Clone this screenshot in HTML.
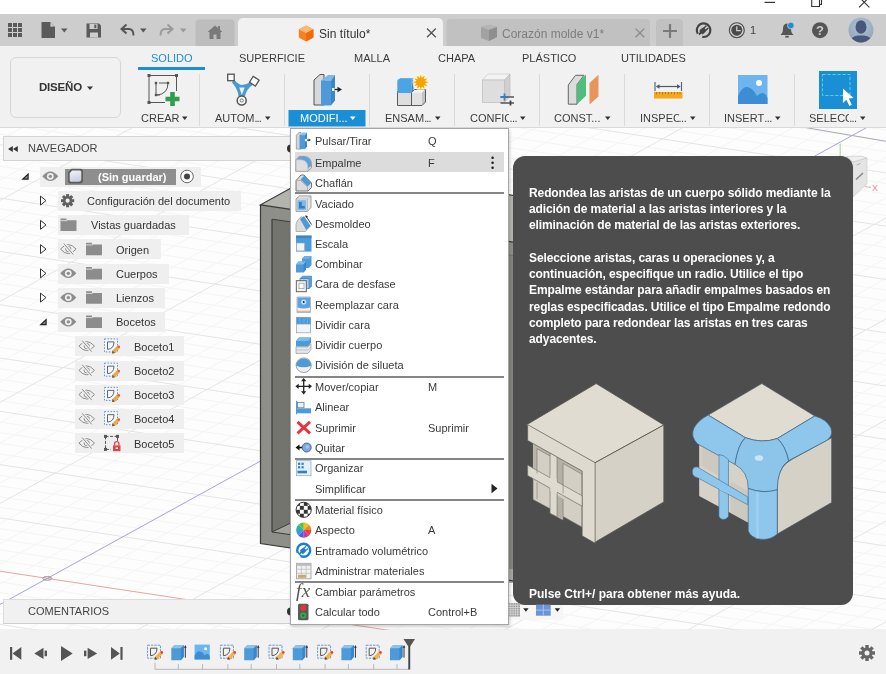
<!DOCTYPE html>
<html lang="es"><head><meta charset="utf-8"><title>Fusion 360</title>
<style>
html,body{margin:0;padding:0}
body{width:886px;height:674px;position:relative;overflow:hidden;background:#fff;font-family:"Liberation Sans",sans-serif;color:#333;font-size:12px}
.abs{position:absolute}
div{will-change:transform}
#titlebar{left:0;top:0;width:886px;height:14px;background:#fff}
#appbar{left:0;top:14px;width:886px;height:32px;background:#cdcdcd}
#ribbon{left:0;top:46px;width:886px;height:81px;background:#f1f1f1;border-bottom:1px solid #d9d9d9}
#canvas{left:0;top:128px;width:886px;height:502px;background:#fdfdfd}
#timeline{left:0;top:628.500px;width:886px;height:45.500px;background:#f1f1f1}
.rtab{position:absolute;top:51.500px;font-size:11px;line-height:13px;color:#3c3c3c;white-space:nowrap}
.glabel{position:absolute;top:112px;font-size:11px;line-height:13px;color:#3c3c3c;white-space:nowrap}
.gsep{position:absolute;top:74px;width:1px;height:52px;background:#dcdcdc}
.nav{position:absolute;font-size:11px;line-height:13px;color:#333;white-space:nowrap}
.navbg{position:absolute;background:#efefef;height:22px}
.mi{position:absolute;left:24px;font-size:11px;line-height:13px;color:#3a3a3a;white-space:nowrap}
.mk{position:absolute;left:137px;font-size:11px;line-height:13px;color:#3a3a3a;white-space:nowrap}
.tl{position:absolute;left:529.400px;font-size:12px;line-height:16px;font-weight:bold;color:#fff;letter-spacing:-0.100px;white-space:nowrap}
.clip{display:inline-block;overflow:hidden;vertical-align:top;height:13px}
.msep{position:absolute;left:5px;width:209px;height:2px;background:#9a9a9a}
</style></head><body>
<div id="titlebar" class="abs"></div>
<div id="appbar" class="abs"></div>
<div id="ribbon" class="abs"></div>
<div id="canvas" class="abs"></div>
<div id="timeline" class="abs"></div>
<!--TOPBAR-->
<svg class="abs" style="left:0;top:0" width="886" height="46" viewBox="0 0 886 46">
<!-- window controls -->
<rect x="764.500" y="1.800" width="10.500" height="1.200" fill="#333"/>
<path d="M811.700 -1V6.500H819.500V-1" fill="none" stroke="#333" stroke-width="1.100"/>
<path d="M819.500 4.500H821.500V-1" fill="none" stroke="#333" stroke-width="1.100"/>
<path d="M859 7.400L869.500 -3M869.400 7.400L859 -3" stroke="#333" stroke-width="1.100"/>
<!-- tabs -->
<path d="M195.500 46V23.500a4 4 0 0 1 4-4h31a4 4 0 0 1 4 4V46Z" fill="#bdbdbd"/>
<path d="M238 46V23a5 5 0 0 1 5-5h195a5 5 0 0 1 5 5V46Z" fill="#f1f1f1"/>
<path d="M446.500 46V23a4 4 0 0 1 4-4h195.500a4 4 0 0 1 4 4V46Z" fill="#c1c1c1"/>
<path d="M656 46V23a4 4 0 0 1 4-4h19a4 4 0 0 1 4 4V46Z" fill="#c1c1c1"/>
<!-- grid icon -->
<g fill="#5a5a5a">
<rect x="8" y="23" width="4" height="4"/><rect x="13" y="23" width="4" height="4"/><rect x="18" y="23" width="4" height="4"/>
<rect x="8" y="28" width="4" height="4"/><rect x="13" y="28" width="4" height="4"/><rect x="18" y="28" width="4" height="4"/>
<rect x="8" y="33" width="4" height="4"/><rect x="13" y="33" width="4" height="4"/><rect x="18" y="33" width="4" height="4"/>
</g>
<!-- file icon -->
<path d="M41.5 22H50L55 27V38H41.5Z" fill="#5a5a5a"/><path d="M50 22V27H55" fill="#cdcdcd" stroke="#5a5a5a" stroke-width="0.8"/>
<path d="M61 28.5h6.5l-3.25 4z" fill="#5a5a5a"/>
<!-- save icon -->
<path d="M86.5 23.5H99L101 25.5V37.5H86.5Z" fill="#5a5a5a"/>
<rect x="89.5" y="24" width="8" height="5" fill="#cdcdcd"/><rect x="94.3" y="24.6" width="2" height="3.6" fill="#5a5a5a"/>
<rect x="90" y="32.5" width="8" height="5" fill="#cdcdcd"/>
<!-- undo -->
<path d="M126.5 24.5L121.5 29L126.5 33.5" fill="none" stroke="#555" stroke-width="2" stroke-linejoin="miter"/>
<path d="M122 29H129.5Q133.5 29.5 133.5 35.5" fill="none" stroke="#555" stroke-width="2"/>
<path d="M140 28.5h6.5l-3.25 4z" fill="#555"/>
<!-- redo -->
<path d="M167.5 24.5L172.5 29L167.5 33.5" fill="none" stroke="#9a9a9a" stroke-width="2"/>
<path d="M172 29H164.5Q160.5 29.5 160.5 35.5" fill="none" stroke="#9a9a9a" stroke-width="2"/>
<path d="M180 28.5h6.5l-3.25 4z" fill="#9a9a9a"/>
<!-- home -->
<path d="M207.5 32L215 25.5L218 28V26H220V29.8L222.5 32H220.5V39H216.5V34.5H213.5V39H209.5V32Z" fill="#7a7a7a"/>
<!-- orange cube -->
<path d="M306 25.500L313.400 29.300V37.500L306 41.500L298.800 37.500V29.300Z" fill="#f58220"/>
<path d="M306 25.500L313.400 29.300L306 33.200L298.800 29.300Z" fill="#ffb874"/>
<path d="M306 33.200L313.400 29.300V37.500L306 41.500Z" fill="#f06a0a"/>
<!-- close active -->
<path d="M427 28.500L435.800 37.300M435.800 28.500L427 37.300" stroke="#555" stroke-width="1.300"/>
<!-- gray cube -->
<path d="M481 27L489 25L497 27V37L489 41L481 38Z" fill="#a2a2a2"/>
<path d="M481 27L489 25L497 27L489 30Z" fill="#b5b5b5"/>
<path d="M489 30L497 27V37L489 41Z" fill="#8f8f8f"/>
<path d="M635.600 28.600L644.200 37.200M644.200 28.600L635.600 37.200" stroke="#8a8a8a" stroke-width="1.300"/>
<!-- plus -->
<path d="M663 31H677M670 24V38" stroke="#7a7a7a" stroke-width="2.2"/>
<!-- job status -->
<circle cx="703.600" cy="30.200" r="6.800" fill="none" stroke="#444" stroke-width="2.200" stroke-dasharray="36.700 6" transform="rotate(150 703.600 30.200)"/>
<g transform="rotate(-42 703.600 30.200)" fill="#444"><rect x="699.600" y="27.600" width="6" height="5.200" rx="1.600"/><rect x="697.200" y="29.300" width="3" height="1.800"/><rect x="705" y="28" width="3.600" height="1.400"/><rect x="705" y="31" width="3.600" height="1.400"/></g>
<!-- clock -->
<circle cx="736.800" cy="30.200" r="7.500" fill="none" stroke="#4a4a4a" stroke-width="1.100"/>
<circle cx="736.800" cy="30.200" r="5.500" fill="#4a4a4a"/>
<path d="M736.800 26.200V30.700H740.800" fill="none" stroke="#cdcdcd" stroke-width="1.300"/>
<!-- bell -->
<path d="M780.400 35Q783 33 783 28.500Q783 24 787 23.500Q791 24 791 28.500Q791 33 793.600 35Z" fill="#555"/>
<rect x="785.300" y="35.800" width="3.400" height="1.800" fill="#555"/>
<circle cx="790.800" cy="25.500" r="3.300" fill="#1a8fd6" stroke="#cdcdcd" stroke-width="0.800"/>
<!-- help -->
<circle cx="820" cy="30.200" r="8" fill="#555"/>
<!-- avatar -->
<defs><clipPath id="av"><circle cx="861" cy="30" r="12.500"/></clipPath>
<radialGradient id="avg" cx="0.5" cy="0.35" r="0.7"><stop offset="0" stop-color="#b4c4d6"/><stop offset="1" stop-color="#8ea2ba"/></radialGradient></defs>
<circle cx="861" cy="30" r="12.500" fill="url(#avg)"/>
<g clip-path="url(#av)" fill="#47587a"><ellipse cx="861" cy="27" rx="5.500" ry="6.800"/><path d="M849 44Q850 36.500 858 35.500H864Q872 36.500 873 44Z"/></g>
</svg>
<div class="abs" style="left:319px;top:27px;font-size:12px;color:#333;line-height:14px">Sin título*</div>
<div class="abs" style="left:502px;top:27px;font-size:12px;color:#7d7d7d;line-height:14px">Corazón molde v1*</div>
<div class="abs" style="left:749.500px;top:23.500px;font-size:11px;color:#444;line-height:13px">1</div>
<div class="abs" style="left:816px;top:23px;font-size:13px;font-weight:bold;color:#cdcdcd;line-height:15px">?</div>
<!--/TOPBAR-->
<!--RIBBON-->
<div class="abs" style="left:10px;top:57px;width:111px;height:61px;border:1px solid #d6d6d6;border-radius:6px;box-sizing:border-box;background:#f1f1f1"></div>
<div class="abs" style="left:39px;top:80px;font-size:11.5px;font-weight:bold;color:#333;letter-spacing:-0.2px;line-height:14px">DISEÑO</div>
<svg class="abs" style="left:0;top:46px" width="886" height="84" viewBox="0 46 886 84">
<path d="M87 86.500h6l-3 3.500z" fill="#333"/>
<rect x="138" y="67" width="67" height="3" fill="#1a8fd6"/>
<rect x="288.500" y="110" width="77" height="16.500" fill="#1a8fd6"/>
<g fill="#dadada">
<rect x="199" y="74" width="1" height="52"/><rect x="284" y="74" width="1" height="52"/><rect x="369" y="74" width="1" height="52"/>
<rect x="454" y="74" width="1" height="52"/><rect x="539" y="74" width="1" height="52"/><rect x="624" y="74" width="1" height="52"/>
<rect x="709" y="74" width="1" height="52"/><rect x="794" y="74" width="1" height="52"/></g>
<!-- arrows -->
<g fill="#333">
<path d="M182 116.500h5.500l-2.750 3.500z"/><path d="M265 116.500h5.500l-2.750 3.500z"/>
<path d="M435 116.500h5.500l-2.750 3.500z"/><path d="M520 116.500h5.500l-2.750 3.500z"/>
<path d="M605 116.500h5.500l-2.750 3.500z"/><path d="M690 116.500h5.500l-2.750 3.500z"/>
<path d="M775 116.500h5.500l-2.750 3.500z"/><path d="M860 116.500h5.500l-2.750 3.500z"/></g>
<path d="M350 116.500h5.500l-2.750 3.500z" fill="#fff"/>
<!-- CREAR icon -->
<g fill="none" stroke="#555" stroke-width="1">
<path d="M149 75.500H176.500M149 75.500V102.500M149 102.500H165M176.500 75.500V91" stroke-dasharray="none"/>
<path d="M156 83V95M156 95H160M159 83H168"/>
<path d="M168 83Q168 94 157 95" stroke="#555"/>
</g>
<g fill="#555"><rect x="147.500" y="74" width="3" height="3"/><rect x="175" y="74" width="3" height="3"/><rect x="147.500" y="101" width="3" height="3"/>
<rect x="154.800" y="81.800" width="2.400" height="2.400"/><rect x="166.800" y="81.800" width="2.400" height="2.400"/><rect x="154.800" y="93.800" width="2.400" height="2.400"/></g>
<path d="M170.200 92h4.600v4.700h4.700v4.600h-4.700v4.700h-4.600v-4.700h-4.700v-4.600h4.700z" fill="#2f9e4a"/>
<!-- AUTOM icon -->
<g>
<path d="M234 79.500Q238 84.300 241.700 85Q246 84.800 251 82L252.500 85Q247 88.500 245 96H238.500Q237.800 89 232 82.500Z" fill="#4a9ad0"/>
<path d="M239.200 87.600L244.700 87.400L241.900 95Z" fill="#e4f2fb"/>
<circle cx="241.700" cy="100.500" r="4.500" fill="#fafafa" stroke="#555" stroke-width="1.500"/><circle cx="241.700" cy="100.500" r="1.600" fill="none" stroke="#666" stroke-width="0.900"/>
<rect x="227.700" y="74.200" width="6.500" height="6.500" fill="#fafafa" stroke="#555" stroke-width="1.300"/>
<rect x="250.800" y="77.700" width="7" height="7" fill="#fafafa" stroke="#555" stroke-width="1.300" transform="rotate(32 254.300 81.200)"/>
</g>
<!-- MODIFI icon -->
<g>
<path d="M314 80L320 74.500H324V105H314Z" fill="#d8d8d8" stroke="#555" stroke-width="1"/>
<path d="M321 80.500L328 75H335L331 80.500Z" fill="#7db9e8"/>
<path d="M331 80.500L335 75V100.500L331 105.500Z" fill="#3a86c8"/>
<rect x="321" y="80.500" width="10" height="25" fill="#4d9ad9"/>
<path d="M332 89.500H338" stroke="#222" stroke-width="1.300"/><path d="M337.500 86.800L342 89.500L337.500 92.200Z" fill="#222"/>
<rect x="332" y="88" width="2.500" height="3" fill="#fff"/>
</g>
<!-- ENSAM icon -->
<g>
<path d="M397.500 90.500H411.500V105.500H397.500Z" fill="#dedede"/>
<path d="M411.500 92.500H422V105.500H411.500Z" fill="#e2e2e2"/>
<path d="M411.500 92.500L414.500 89.500H425.500L422 92.500Z" fill="#f2f2f2"/>
<path d="M422 92.500L425.500 89.500V102L422 105.500Z" fill="#c4c4c4"/>
<path d="M397.500 91V105.500H422L425.500 102V89.500H414.500L411.500 92.500V105.500" fill="none" stroke="#5a5a5a" stroke-width="1"/>
<path d="M397.500 81L400.500 78H413.500L411.500 81Z" fill="#7cc0f0"/>
<path d="M397.300 81Q397.300 79 400 78.500H411.500V93H397.300Z" fill="#4da4e4"/>
<path d="M411.500 81L413.500 78V90L411.500 93Z" fill="#3a86c8"/>
<circle cx="420.8" cy="82.2" r="8.500" fill="#fff6c8" opacity="0.700"/>
<path d="M420.8 74.6L421.9 78.0L424.6 75.6L423.8 79.2L427.4 78.4L425.0 81.1L428.4 82.2L425.0 83.3L427.4 86.0L423.8 85.2L424.6 88.8L421.9 86.4L420.8 89.8L419.7 86.4L417.0 88.8L417.8 85.2L414.2 86.0L416.6 83.3L413.2 82.2L416.6 81.1L414.2 78.4L417.8 79.2L417.0 75.6L419.7 78.0Z" fill="#f7a400"/>
</g>
<!-- CONFIG icon -->
<g>
<path d="M482.500 80L488 74H510L504.500 80Z" fill="#f3f3f3" stroke="#c9c9c9" stroke-width="0.700"/>
<rect x="482.500" y="80" width="22" height="22.500" fill="#dedede" stroke="#bdbdbd" stroke-width="0.700"/>
<path d="M504.500 80L510 74V96.500L504.500 102.500Z" fill="#cfcfcf" stroke="#bdbdbd" stroke-width="0.700"/>
<path d="M500.500 97H514M500.500 103H514" stroke="#555" stroke-width="1.400"/>
<path d="M504.500 93.500V100.500" stroke="#2f7fc2" stroke-width="1.800"/><path d="M500.500 97H508" stroke="#2f7fc2" stroke-width="1.600"/>
<path d="M510.500 100.500V105.500" stroke="#444" stroke-width="1.800"/>
</g>
<!-- CONST icon -->
<g>
<path d="M568.300 85L575.500 75.300H584L577 84.500V104.200H568.300Z" fill="#dcdcdc" stroke="#666" stroke-width="1"/>
<path d="M577 83.800L586 74.500V95.800L577 104.200Z" fill="#4fbd7c"/>
<path d="M589.500 83L598.500 74.800V96.500L589.500 104.500Z" fill="#e8955c"/>
</g>
<!-- INSPEC icon -->
<g>
<rect x="654" y="92" width="28.500" height="6.500" fill="#f5a81c"/>
<path d="M656.500 92v2.500M659.500 92v2M662.500 92v2.500M665.500 92v2M668.500 92v2.500M671.500 92v2M674.500 92v2.500M677.500 92v2M680 92v2.500" stroke="#b3720a" stroke-width="0.800"/>
<path d="M655 82V91M681.500 82V91" stroke="#4a6f8a" stroke-width="1.200"/>
<path d="M657 86.500H679.500" stroke="#4a5a66" stroke-width="1.200"/>
<path d="M655.800 86.500L659.500 84.200V88.800ZM680.700 86.500L677 84.200V88.800Z" fill="#4a5a66"/>
</g>
<!-- INSERT icon -->
<g>
<rect x="738" y="75" width="29.500" height="29" fill="#6cb5ef"/>
<path d="M738 96Q742 86.500 747.500 87Q753 88 757 96Q760.500 92.500 763 93Q766 94 767.500 98V104H738Z" fill="#3d8dd4"/>
<circle cx="759" cy="83" r="3" fill="#fffbe6"/>
</g>
<!-- SELECC icon -->
<g>
<rect x="819" y="71" width="38" height="38" fill="#1a8fd6"/>
<rect x="822.500" y="74.500" width="27.500" height="21" fill="none" stroke="#58d0f0" stroke-width="1" stroke-dasharray="3.200 1.800"/>
<path d="M843 88.500L853.500 98L848.800 98.500L851.800 104.800L849.400 106L846.400 99.800L843 103Z" fill="#fff"/>
</g>
</svg>
<div class="rtab" style="left:150.500px;color:#1a8fd6">SOLIDO</div>
<div class="rtab" style="left:239px">SUPERFICIE</div>
<div class="rtab" style="left:354px">MALLA</div>
<div class="rtab" style="left:437.500px">CHAPA</div>
<div class="rtab" style="left:521.500px">PLÁSTICO</div>
<div class="rtab" style="left:621px">UTILIDADES</div>
<div class="glabel" style="left:140.500px">CREAR</div>
<div class="glabel" style="left:214.500px">AUTOM<span style="letter-spacing:-1px">...</span></div>
<div class="glabel" style="left:299.500px;color:#fff">MODIFI...</div>
<div class="glabel" style="left:384.500px">ENSAM<span style="letter-spacing:-0.900px">...</span></div>
<div class="glabel" style="left:469.500px">CONFI<span class="clip" style="width:5.200px">C</span><span style="letter-spacing:-0.500px">...</span></div>
<div class="glabel" style="left:554px">CONST...</div>
<div class="glabel" style="left:639.500px">INSPE<span class="clip" style="width:5.500px">C</span><span style="letter-spacing:-0.500px">...</span></div>
<div class="glabel" style="left:724px">INSERT<span style="letter-spacing:-0.500px">...</span></div>
<div class="glabel" style="left:809px">SELEC<span class="clip" style="width:4.200px">C</span><span style="letter-spacing:-0.700px">...</span></div>
<!--/RIBBON-->
<!--CANVAS-->
<svg class="abs" style="left:0;top:128px" width="886" height="502" viewBox="0 128 886 502">
<path d="M0 -4.4L886 130.2M0 6.2L886 140.9M0 16.9L886 151.6M0 27.6L886 162.2M0 48.9L886 183.5M0 59.5L886 194.2M0 70.2L886 204.9M0 80.9L886 215.5M0 102.2L886 236.8M0 112.8L886 247.5M0 123.5L886 258.2M0 134.2L886 268.8M0 155.5L886 290.1M0 166.1L886 300.8M0 176.8L886 311.5M0 187.5L886 322.1M0 208.8L886 343.4M0 219.4L886 354.1M0 230.1L886 364.8M0 240.8L886 375.4M0 262.1L886 396.7M0 272.7L886 407.4M0 283.4L886 418.1M0 294.1L886 428.7M0 315.4L886 450.0M0 326.0L886 460.7M0 336.7L886 471.4M0 347.4L886 482.0M0 368.7L886 503.3M0 379.3L886 514.0M0 390.0L886 524.7M0 400.7L886 535.3M0 422.0L886 556.6M0 432.6L886 567.3M0 443.3L886 578.0M0 454.0L886 588.6M0 475.3L886 609.9M0 485.9L886 620.6M0 496.6L886 631.3M0 507.3L886 641.9M0 528.6L886 663.2M0 539.2L886 673.9M0 549.9L886 684.6M0 560.6L886 695.2M0 581.9L886 716.5M0 592.5L886 727.2M0 603.2L886 737.9M0 613.9L886 748.5M0 139.8L886 -347.7M0 160.0L886 -327.5M0 180.2L886 -307.3M0 220.6L886 -266.9M0 240.8L886 -246.7M0 261.0L886 -226.5M0 281.2L886 -206.3M0 321.6L886 -165.9M0 341.8L886 -145.7M0 362.0L886 -125.5M0 382.2L886 -105.3M0 422.6L886 -64.9M0 442.8L886 -44.7M0 463.0L886 -24.5M0 483.2L886 -4.3M0 523.6L886 36.1M0 543.8L886 56.3M0 564.0L886 76.5M0 584.2L886 96.7M0 624.6L886 137.1M0 644.8L886 157.3M0 665.0L886 177.5M0 685.2L886 197.7M0 725.6L886 238.1M0 745.8L886 258.3M0 766.0L886 278.5M0 786.2L886 298.7M0 826.6L886 339.1M0 846.8L886 359.3M0 867.0L886 379.5M0 887.2L886 399.7M0 927.6L886 440.1M0 947.8L886 460.3M0 968.0L886 480.5M0 988.2L886 500.7M0 1028.6L886 541.1M0 1048.8L886 561.3M0 1069.0L886 581.5M0 1089.2L886 601.7" stroke="#f4f4f4" stroke-width="1" fill="none"/>
<path d="M0 38.2L886 172.9M0 91.5L886 226.2M0 144.8L886 279.5M0 198.1L886 332.8M0 251.4L886 386.1M0 304.7L886 439.4M0 358.0L886 492.7M0 411.3L886 546.0M0 464.6L886 599.3M0 517.9L886 652.6M0 624.5L886 759.2M0 200.4L886 -287.1M0 301.4L886 -186.1M0 402.4L886 -85.1M0 503.4L886 15.9M0 705.4L886 217.9M0 806.4L886 318.9M0 907.4L886 419.9M0 1008.4L886 520.9M0 1109.4L886 621.9" stroke="#e4e4e6" stroke-width="1" fill="none"/>
<path d="M0 571.2L886 705.9" stroke="#e9a3a3" stroke-width="1" fill="none"/>
<path d="M0 604.4L886 116.9" stroke="#a4a4d8" stroke-width="1" fill="none"/>
<ellipse cx="47.3" cy="578.4" rx="4.500" ry="1.800" fill="none" stroke="#9a8a90" stroke-width="1"/>
<g>
<path d="M260.500 204.800L328 167.700L520 196.500V243.200Z" fill="#b4b4af"/>
<path d="M260.500 204.800L520 243.200V582L260.500 543.600Z" fill="#8f8f8a"/>
<path d="M272 219.200L520 256V568L272 532Z" fill="#74746f"/>
<path d="M272 532L300 518.500V536Z" fill="#a3a39e"/><path d="M500 256V569H520V256Z" fill="#858580"/><path d="M500 569H520V583H500Z" fill="#a6a6a1"/>
<path d="M272 219.200V532" stroke="#3c3c3a" stroke-width="1.200" fill="none"/>
<path d="M272 219.200L300 223.200M272 532L300 518.500M272 532L300 536" stroke="#3c3c3a" stroke-width="1" fill="none"/>
<path d="M520 196.500L328 167.700L260.500 204.800L520 243.200M260.500 204.800V543.600L520 582" stroke="#3a3a38" stroke-width="1.200" fill="none"/>
</g>
<g>
<path d="M800 126.600L886 141.300" stroke="#a8a8b4" stroke-width="1"/>
<path d="M840.200 143.500V157" stroke="#a4e4a4" stroke-width="1.300"/>
<path d="M846.500 156.500L861 156L867 158L867 184L853 197L846.500 192Z" fill="#ebebeb"/>
<path d="M853 162L867 158V184L853 197Z" fill="#e4e4e4" stroke="#cfcfcf" stroke-width="0.600"/>
<path d="M846.500 156.500L861 156L867 158L853 162Z" fill="#efefef" stroke="#c4c4c4" stroke-width="0.600"/>
<path d="M856 179.500L863 173" stroke="#8a8a8a" stroke-width="1.600"/>
<path d="M856.500 165L860.500 163.500" stroke="#b0b0b0" stroke-width="1"/>
<path d="M865 186.500L871 187.500" stroke="#ecaab4" stroke-width="1"/>
</g>
</svg>
<div class="abs" style="left:872.300px;top:183px;font-size:9px;line-height:10px;color:#e88a98">X</div>
<svg class="abs" style="left:500px;top:596px" width="70" height="30" viewBox="500 596 70 30"><rect x="505" y="600" width="58" height="20" fill="#f6f6f6"/></svg>
<!--/CANVAS-->
<!--NAV-->
<div class="abs" style="left:3px;top:136px;width:290px;height:24.500px;background:#f1f1f1;border:1px solid #d4d4d4;box-sizing:border-box"></div>
<div class="nav" style="left:28px;top:141.700px;color:#444">NAVEGADOR</div>
<div class="abs" style="left:39.5px;top:166.6px;width:160.5px;height:19.600px;background:#efefef"></div>
<div class="abs" style="left:64.500px;top:168.8px;width:111px;height:15.500px;background:#8e8e8e"></div>
<div class="abs" style="left:57.6px;top:190.8px;width:183.4px;height:19.600px;background:#efefef"></div>
<div class="abs" style="left:57.6px;top:215.1px;width:130.8px;height:19.600px;background:#efefef"></div>
<div class="abs" style="left:57.6px;top:239.3px;width:103.4px;height:19.600px;background:#efefef"></div>
<div class="abs" style="left:57.6px;top:263.6px;width:111.4px;height:19.600px;background:#efefef"></div>
<div class="abs" style="left:57.6px;top:287.8px;width:107.4px;height:19.600px;background:#efefef"></div>
<div class="abs" style="left:57.6px;top:312.1px;width:107.4px;height:19.600px;background:#efefef"></div>
<div class="abs" style="left:75px;top:336.3px;width:108.5px;height:19.600px;background:#efefef"></div>
<div class="abs" style="left:75px;top:360.6px;width:108.5px;height:19.600px;background:#efefef"></div>
<div class="abs" style="left:75px;top:384.8px;width:108.5px;height:19.600px;background:#efefef"></div>
<div class="abs" style="left:75px;top:409.1px;width:108.5px;height:19.600px;background:#efefef"></div>
<div class="abs" style="left:75px;top:433.3px;width:108.5px;height:19.600px;background:#efefef"></div>
<div class="nav" style="left:98px;top:170.8px;color:#fff;font-weight:bold;font-size:11px">(Sin guardar)</div>
<div class="nav" style="left:87.3px;top:195.0px;">Configuración del documento</div>
<div class="nav" style="left:91.2px;top:219.2px;">Vistas guardadas</div>
<div class="nav" style="left:116.3px;top:243.5px;">Origen</div>
<div class="nav" style="left:116.3px;top:267.8px;">Cuerpos</div>
<div class="nav" style="left:116.3px;top:292.0px;">Lienzos</div>
<div class="nav" style="left:116.3px;top:316.2px;">Bocetos</div>
<div class="nav" style="left:134.4px;top:340.5px;">Boceto1</div>
<div class="nav" style="left:134.4px;top:364.8px;">Boceto2</div>
<div class="nav" style="left:134.4px;top:389.0px;">Boceto3</div>
<div class="nav" style="left:134.4px;top:413.2px;">Boceto4</div>
<div class="nav" style="left:134.4px;top:437.5px;">Boceto5</div>
<svg class="abs" style="left:0;top:130px" width="300" height="340" viewBox="0 130 300 340">
<defs><linearGradient id="cmp" x1="0" y1="0" x2="0.3" y2="1"><stop offset="0" stop-color="#f2f3f7"/><stop offset="1" stop-color="#cdd1e0"/></linearGradient></defs>
<path d="M8 149L12.800 146V152ZM13 149L17.800 146V152Z" fill="#333"/>
<circle cx="291" cy="148.500" r="4" fill="#333"/>
<path d="M21.3 179.65L28.700000000000003 172.85V179.65Z" fill="#222"/><path d="M24.3 178.55L27.5 175.55V178.55Z" fill="#888"/>
<path d="M42.3 176.35Q50.3 166.85 58.3 176.35Q50.3 185.85 42.3 176.35Z" fill="#8c8c8c"/><circle cx="50.3" cy="176.35" r="3.400" fill="#efefef"/><circle cx="50.3" cy="176.35" r="1.700" fill="#8c8c8c"/>
<path d="M71.500 168.85H80.500Q83 168.85 83 171.45V179.95Q83 183.55 79.500 183.55H71Q68.100 183.55 68.100 180.95V172.25Z" fill="#5c5c5c"/><path d="M72.300 170.45H79.800Q81.300 170.45 81.300 171.95V179.05Q81.300 181.75 78.600 181.75H71.200Q69.700 181.75 69.700 180.25V173.05Z" fill="url(#cmp)"/>
<circle cx="187" cy="176.45" r="6.300" fill="#fff" stroke="#666" stroke-width="1"/><circle cx="187" cy="176.45" r="3" fill="#444"/>
<path d="M40.5 196.10L46.0 200.60L40.5 205.10Z" fill="none" stroke="#333" stroke-width="1"/>
<rect x="66.1" y="194.10" width="3" height="3.600" fill="#606060" transform="rotate(0 67.6 200.70)"/><rect x="66.1" y="194.10" width="3" height="3.600" fill="#606060" transform="rotate(45 67.6 200.70)"/><rect x="66.1" y="194.10" width="3" height="3.600" fill="#606060" transform="rotate(90 67.6 200.70)"/><rect x="66.1" y="194.10" width="3" height="3.600" fill="#606060" transform="rotate(135 67.6 200.70)"/><rect x="66.1" y="194.10" width="3" height="3.600" fill="#606060" transform="rotate(180 67.6 200.70)"/><rect x="66.1" y="194.10" width="3" height="3.600" fill="#606060" transform="rotate(225 67.6 200.70)"/><rect x="66.1" y="194.10" width="3" height="3.600" fill="#606060" transform="rotate(270 67.6 200.70)"/><rect x="66.1" y="194.10" width="3" height="3.600" fill="#606060" transform="rotate(315 67.6 200.70)"/><circle cx="67.6" cy="200.70" r="4.600" fill="#606060"/><circle cx="67.6" cy="200.70" r="2.100" fill="#efefef"/>
<path d="M40.5 220.35L46.0 224.85L40.5 229.35Z" fill="none" stroke="#333" stroke-width="1"/>
<path d="M60.5 218.55H66.5V220.25H76.5V231.05H60.5Z" fill="#8c8c8c"/><path d="M60.5 220.65H67.1" stroke="#efefef" stroke-width="0.800"/>
<path d="M40.5 244.60L46.0 249.10L40.5 253.60Z" fill="none" stroke="#333" stroke-width="1"/>
<path d="M60.5 249.10Q68.3 240.10 76.1 249.10Q68.3 258.10 60.5 249.10Z" fill="none" stroke="#8c8c8c" stroke-width="1"/><circle cx="68.3" cy="249.10" r="2.600" fill="none" stroke="#8c8c8c" stroke-width="1"/><path d="M63.8 243.60L73.3 254.60" stroke="#efefef" stroke-width="3"/><path d="M63.8 243.60L73.3 254.60" stroke="#8c8c8c" stroke-width="1"/>
<path d="M86 242.80H92V244.50H102V255.30H86Z" fill="#8c8c8c"/><path d="M86 244.90H92.6" stroke="#efefef" stroke-width="0.800"/>
<path d="M40.5 268.85L46.0 273.35L40.5 277.85Z" fill="none" stroke="#333" stroke-width="1"/>
<path d="M60.3 273.35Q68.3 263.85 76.3 273.35Q68.3 282.85 60.3 273.35Z" fill="#8c8c8c"/><circle cx="68.3" cy="273.35" r="3.400" fill="#efefef"/><circle cx="68.3" cy="273.35" r="1.700" fill="#8c8c8c"/>
<path d="M86 267.05H92V268.75H102V279.55H86Z" fill="#8c8c8c"/><path d="M86 269.15H92.6" stroke="#efefef" stroke-width="0.800"/>
<path d="M40.5 293.10L46.0 297.60L40.5 302.10Z" fill="none" stroke="#333" stroke-width="1"/>
<path d="M60.3 297.60Q68.3 288.10 76.3 297.60Q68.3 307.10 60.3 297.60Z" fill="#8c8c8c"/><circle cx="68.3" cy="297.60" r="3.400" fill="#efefef"/><circle cx="68.3" cy="297.60" r="1.700" fill="#8c8c8c"/>
<path d="M86 291.30H92V293.00H102V303.80H86Z" fill="#8c8c8c"/><path d="M86 293.40H92.6" stroke="#efefef" stroke-width="0.800"/>
<path d="M39.3 325.15L46.699999999999996 318.35V325.15Z" fill="#222"/><path d="M42.3 324.05L45.5 321.05V324.05Z" fill="#888"/>
<path d="M60.3 321.85Q68.3 312.35 76.3 321.85Q68.3 331.35 60.3 321.85Z" fill="#8c8c8c"/><circle cx="68.3" cy="321.85" r="3.400" fill="#efefef"/><circle cx="68.3" cy="321.85" r="1.700" fill="#8c8c8c"/>
<path d="M86 315.55H92V317.25H102V328.05H86Z" fill="#8c8c8c"/><path d="M86 317.65H92.6" stroke="#efefef" stroke-width="0.800"/>
<path d="M78.9 346.10Q86.7 337.10 94.5 346.10Q86.7 355.10 78.9 346.10Z" fill="none" stroke="#8c8c8c" stroke-width="1"/><circle cx="86.7" cy="346.10" r="2.600" fill="none" stroke="#8c8c8c" stroke-width="1"/><path d="M82.2 340.60L91.7 351.60" stroke="#efefef" stroke-width="3"/><path d="M82.2 340.60L91.7 351.60" stroke="#8c8c8c" stroke-width="1"/>
<rect x="104.5" y="338.90" width="13" height="13" fill="#f4f8fc" stroke="#5a94d0" stroke-width="1" stroke-dasharray="1.600 1.400"/><path d="M107.5 341.90H114Q114 348.90 107.5 349.40Z" fill="none" stroke="#666" stroke-width="1"/><path d="M112.5 350.40L117.5 345.40L120 347.90L115 352.90L112 353.40Z" fill="#f0aa48"/><path d="M112.5 350.40L115 352.90L112 353.40Z" fill="#6a5a4a"/><circle cx="118.8" cy="346.70" r="1.200" fill="#e8524a"/>
<path d="M78.9 370.35Q86.7 361.35 94.5 370.35Q86.7 379.35 78.9 370.35Z" fill="none" stroke="#8c8c8c" stroke-width="1"/><circle cx="86.7" cy="370.35" r="2.600" fill="none" stroke="#8c8c8c" stroke-width="1"/><path d="M82.2 364.85L91.7 375.85" stroke="#efefef" stroke-width="3"/><path d="M82.2 364.85L91.7 375.85" stroke="#8c8c8c" stroke-width="1"/>
<rect x="104.5" y="363.15" width="13" height="13" fill="#f4f8fc" stroke="#5a94d0" stroke-width="1" stroke-dasharray="1.600 1.400"/><path d="M107.5 366.15H114Q114 373.15 107.5 373.65Z" fill="none" stroke="#666" stroke-width="1"/><path d="M112.5 374.65L117.5 369.65L120 372.15L115 377.15L112 377.65Z" fill="#f0aa48"/><path d="M112.5 374.65L115 377.15L112 377.65Z" fill="#6a5a4a"/><circle cx="118.8" cy="370.95" r="1.200" fill="#e8524a"/>
<path d="M78.9 394.60Q86.7 385.60 94.5 394.60Q86.7 403.60 78.9 394.60Z" fill="none" stroke="#8c8c8c" stroke-width="1"/><circle cx="86.7" cy="394.60" r="2.600" fill="none" stroke="#8c8c8c" stroke-width="1"/><path d="M82.2 389.10L91.7 400.10" stroke="#efefef" stroke-width="3"/><path d="M82.2 389.10L91.7 400.10" stroke="#8c8c8c" stroke-width="1"/>
<rect x="104.5" y="387.40" width="13" height="13" fill="#f4f8fc" stroke="#5a94d0" stroke-width="1" stroke-dasharray="1.600 1.400"/><path d="M107.5 390.40H114Q114 397.40 107.5 397.90Z" fill="none" stroke="#666" stroke-width="1"/><path d="M112.5 398.90L117.5 393.90L120 396.40L115 401.40L112 401.90Z" fill="#f0aa48"/><path d="M112.5 398.90L115 401.40L112 401.90Z" fill="#6a5a4a"/><circle cx="118.8" cy="395.20" r="1.200" fill="#e8524a"/>
<path d="M78.9 418.85Q86.7 409.85 94.5 418.85Q86.7 427.85 78.9 418.85Z" fill="none" stroke="#8c8c8c" stroke-width="1"/><circle cx="86.7" cy="418.85" r="2.600" fill="none" stroke="#8c8c8c" stroke-width="1"/><path d="M82.2 413.35L91.7 424.35" stroke="#efefef" stroke-width="3"/><path d="M82.2 413.35L91.7 424.35" stroke="#8c8c8c" stroke-width="1"/>
<rect x="104.5" y="411.65" width="13" height="13" fill="#f4f8fc" stroke="#5a94d0" stroke-width="1" stroke-dasharray="1.600 1.400"/><path d="M107.5 414.65H114Q114 421.65 107.5 422.15Z" fill="none" stroke="#666" stroke-width="1"/><path d="M112.5 423.15L117.5 418.15L120 420.65L115 425.65L112 426.15Z" fill="#f0aa48"/><path d="M112.5 423.15L115 425.65L112 426.15Z" fill="#6a5a4a"/><circle cx="118.8" cy="419.45" r="1.200" fill="#e8524a"/>
<path d="M78.9 443.10Q86.7 434.10 94.5 443.10Q86.7 452.10 78.9 443.10Z" fill="none" stroke="#8c8c8c" stroke-width="1"/><circle cx="86.7" cy="443.10" r="2.600" fill="none" stroke="#8c8c8c" stroke-width="1"/><path d="M82.2 437.60L91.7 448.60" stroke="#efefef" stroke-width="3"/><path d="M82.2 437.60L91.7 448.60" stroke="#8c8c8c" stroke-width="1"/>
<path d="M105.5 436.40H117.5V441.90M105.5 436.40V449.40H111" fill="none" stroke="#555" stroke-width="1" stroke-dasharray="3 1.500"/><rect x="104" y="434.90" width="3" height="3" fill="#555"/><rect x="116" y="434.90" width="3" height="3" fill="#555"/><rect x="104" y="447.90" width="3" height="3" fill="#555"/><rect x="113" y="445.40" width="7.500" height="5.800" fill="#e0444a"/><path d="M114.6 445.40V443.70Q114.6 441.70 116.75 441.70Q118.9 441.70 118.9 443.70V445.40" fill="none" stroke="#e0444a" stroke-width="1.300"/><rect x="115.6" y="447.50" width="2.400" height="1.500" fill="#fff"/>
</svg>
<div class="abs" style="left:3px;top:599px;width:290px;height:24.500px;background:#f1f1f1;border:1px solid #dcdcdc;border-bottom-color:#cfcfcf;box-sizing:border-box"></div>
<div class="nav" style="left:28.300px;top:605px;color:#444">COMENTARIOS</div>
<svg class="abs" style="left:280px;top:600px" width="20" height="24" viewBox="280 600 20 24"><circle cx="291" cy="611.500" r="4" fill="#333"/></svg>
<!--/NAV-->
<!--MENU-->
<div class="abs" style="left:289.500px;top:128px;width:219px;height:496.500px;background:#fff;border:1px solid #a6a6a6;box-sizing:border-box;box-shadow:1px 2px 3px rgba(0,0,0,0.18)"></div>
<div class="abs" style="left:295px;top:152px;width:208.500px;height:20px;background:#dcdcdc"></div>
<div class="abs" style="left:295px;top:192.4px;width:208.500px;height:1.600px;background:#858585"></div>
<div class="abs" style="left:295px;top:375.6px;width:208.500px;height:1.600px;background:#858585"></div>
<div class="abs" style="left:295px;top:457.6px;width:208.500px;height:1.600px;background:#858585"></div>
<div class="abs" style="left:295px;top:499.0px;width:208.500px;height:1.600px;background:#858585"></div>
<div class="abs" style="left:295px;top:580.5px;width:208.500px;height:1.600px;background:#858585"></div>
<div class="mi" style="left:314.800px;top:134.8px">Pulsar/Tirar</div>
<div class="mk" style="left:428.200px;top:134.8px">Q</div>
<div class="mi" style="left:314.800px;top:156.9px">Empalme</div>
<div class="mk" style="left:428.200px;top:156.9px">F</div>
<div class="mi" style="left:314.800px;top:176.7px">Chaflán</div>
<div class="mi" style="left:314.800px;top:197.6px">Vaciado</div>
<div class="mi" style="left:314.800px;top:217.7px">Desmoldeo</div>
<div class="mi" style="left:314.800px;top:237.8px">Escala</div>
<div class="mi" style="left:314.800px;top:258.2px">Combinar</div>
<div class="mi" style="left:314.800px;top:278.4px">Cara de desfase</div>
<div class="mi" style="left:314.800px;top:298.7px">Reemplazar cara</div>
<div class="mi" style="left:314.800px;top:319.0px">Dividir cara</div>
<div class="mi" style="left:314.800px;top:339.1px">Dividir cuerpo</div>
<div class="mi" style="left:314.800px;top:359.4px">División de silueta</div>
<div class="mi" style="left:314.800px;top:380.5px">Mover/copiar</div>
<div class="mk" style="left:428.200px;top:380.5px">M</div>
<div class="mi" style="left:314.800px;top:401.0px">Alinear</div>
<div class="mi" style="left:314.800px;top:421.6px">Suprimir</div>
<div class="mk" style="left:428.200px;top:421.6px">Suprimir</div>
<div class="mi" style="left:314.800px;top:441.7px">Quitar</div>
<div class="mi" style="left:314.800px;top:462.4px">Organizar</div>
<div class="mi" style="left:314.800px;top:482.7px">Simplificar</div>
<div class="mi" style="left:314.800px;top:504.0px">Material físico</div>
<div class="mi" style="left:314.800px;top:524.3px">Aspecto</div>
<div class="mk" style="left:428.200px;top:524.3px">A</div>
<div class="mi" style="left:314.800px;top:544.5px">Entramado volumétrico</div>
<div class="mi" style="left:314.800px;top:565.0px">Administrar materiales</div>
<div class="mi" style="left:314.800px;top:585.7px">Cambiar parámetros</div>
<div class="mi" style="left:314.800px;top:606.0px">Calcular todo</div>
<div class="mk" style="left:428.200px;top:606.0px">Control+B</div>
<div class="abs" style="left:296px;top:581.0px;font-family:'Liberation Serif',serif;font-style:italic;font-size:19px;line-height:19px;color:#555;letter-spacing:0.500px">fx</div>
<svg class="abs" style="left:286px;top:126px" width="230" height="504" viewBox="286 126 230 504">
<circle cx="492.600" cy="157.7" r="1.300" fill="#222"/><circle cx="492.600" cy="162.7" r="1.300" fill="#222"/><circle cx="492.600" cy="167.7" r="1.300" fill="#222"/>
<path d="M491.500 483.8L497.500 488.5L491.500 493.2Z" fill="#222"/>
<path d="M296.300 135.1L299 132.6H301V149.1H296.300Z" fill="#d6d6d6" stroke="#8a8a8a" stroke-width="0.700"/><path d="M299.500 135.1L302.500 132.6H307L305 135.1Z" fill="#8cc4ee"/><rect x="299.500" y="135.1" width="5.500" height="14" fill="#4d9ad9"/><path d="M305 135.1L307 132.6V146.6L305 149.1Z" fill="#3a86c8"/><rect x="305" y="138.9" width="2" height="2.400" fill="#fff"/><path d="M307 140.1H309" stroke="#222" stroke-width="1"/><path d="M308.600 138.6L310.800 140.1L308.600 141.6Z" fill="#222"/>
<path d="M296 159.7L299 156.4H304Q311.500 156.7 311.500 164.7V167.7L308 171.2H296Z" fill="#d8d8d8" stroke="#8a8a8a" stroke-width="0.800"/><path d="M299.500 156.7H304Q311.500 156.7 311.300 165.7L308 168.2Q308.500 160.2 301 159.5H296.500Z" fill="#5aa3e0"/><path d="M296 159.7H301Q308 160.2 308 168.2V171.2H296Z" fill="#dedede" stroke="#9a9a9a" stroke-width="0.500"/>
<path d="M296 180.5L301 175.0H304L311.500 183.0V187.5L308 191.0H296Z" fill="#dcdcdc" stroke="#666" stroke-width="0.900"/><path d="M300.500 179.5L304.500 175.5L311.300 182.8L307.500 186.5Z" fill="#4d9ad9"/><path d="M296 180.5H300.500L307.500 187.0V191.0" fill="none" stroke="#999" stroke-width="0.600"/>
<path d="M296 198.9L299.500 195.9H311V207.4L307.500 211.4H296Z" fill="#e4e4e4" stroke="#8a8a8a" stroke-width="0.800"/><path d="M296 198.9H307.500V211.4M307.500 198.9L311 195.9" fill="none" stroke="#aaa" stroke-width="0.600"/><rect x="297.300" y="200.2" width="9" height="10" fill="#7db9e8"/><path d="M299 201.9H301.800V205.9H304.800V208.6H299Z" fill="#2f7fc2"/>
<path d="M296 224.0Q297 219.5 301.500 216.5L309.500 226.5L305.500 231.5H296Z" fill="#dcdcdc" stroke="#999" stroke-width="0.700"/><path d="M300 219.0L304 216.0L310.800 226.0L306.300 230.0Z" fill="#4d9ad9"/><path d="M306 216.0L311.500 224.5" stroke="#222" stroke-width="0.900"/><path d="M305.300 215.3L308 216.2L306 218.0Z" fill="#222"/>
<rect x="296" y="235.6" width="15.500" height="16" fill="#4d9ad9"/><rect x="296.800" y="243.1" width="7.500" height="7.700" fill="#f4f4f4" stroke="#bbb" stroke-width="0.500"/><rect x="296" y="235.6" width="15.500" height="2.500" fill="#3a86c8"/>
<path d="M302 259.0L304.500 256.0H311.500V265.0L309 268.0H302Z" fill="#4d9ad9"/><path d="M302 259.0L304.500 256.0H311.500L309 259.0Z" fill="#6cb0ea"/><path d="M296 264.5L298.500 261.5H306V269.5L303.500 272.5H296Z" fill="#4d9ad9"/><path d="M296 264.5L298.500 261.5H306L303.500 264.5Z" fill="#7dbbee"/><path d="M303.500 264.5L306 261.5V269.5L303.500 272.5Z" fill="#3a86c8"/>
<path d="M300 278.7L302.500 276.2H311.500V286.2L309 288.7" fill="#5aa3e0" stroke="#3a6fa8" stroke-width="0.600"/><rect x="300" y="278.7" width="9" height="10" fill="#a8d0f2" stroke="#3a6fa8" stroke-width="0.600"/><rect x="296.300" y="280.7" width="10" height="11" fill="#f4f4f4" stroke="#555" stroke-width="0.900"/><rect x="299" y="283.2" width="5" height="5.500" fill="#fff" stroke="#888" stroke-width="0.600"/>
<path d="M297 297.0H310.500V312.5H297Z" fill="#f0f0f0" stroke="#999" stroke-width="0.700"/><path d="M297.500 297.5H310V307.5Q303.500 309.5 297.500 307.5Z" fill="#5aa3e0"/><circle cx="303.700" cy="302.0" r="2.600" fill="#bfe0fa"/><circle cx="303.700" cy="302.0" r="0.900" fill="#123"/><path d="M297 311.3H310.500" stroke="#e8a070" stroke-width="1"/>
<rect x="296.500" y="317.3" width="14" height="15.500" fill="#f4f4f4" stroke="#999" stroke-width="0.700"/><rect x="296.500" y="317.3" width="14" height="7" fill="#4d9ad9"/><path d="M300 317.8V323.8M304 317.8V323.8M307.500 317.8V323.8" stroke="#7dbbee" stroke-width="0.600"/>
<path d="M296 346.9H308L311 343.9V349.4L308 353.4H296Z" fill="#e8e8e8" stroke="#999" stroke-width="0.700"/><path d="M296 349.9H308L311 346.9" fill="none" stroke="#aaa" stroke-width="0.600"/><path d="M296 340.9L299 337.4H311V342.9L308 346.4H296Z" fill="#4d9ad9"/><path d="M296 340.9L299 337.4H311L308 340.9Z" fill="#7dbbee"/>
<ellipse cx="303.700" cy="365.2" rx="7.600" ry="7.300" fill="#f0f0f0" stroke="#888" stroke-width="0.800"/><path d="M296.200 365.7A7.500 7.200 0 0 1 311.200 365.7Q303.700 368.7 296.200 365.7Z" fill="#4d9ad9"/>
<path d="M303.700 379.8V392.8M297.200 386.3H310.200" stroke="#222" stroke-width="1.300"/><path d="M303.700 378.0L306.300 381.3H301.100ZM303.700 394.6L306.300 391.3H301.100ZM295.400 386.3L298.700 383.7V388.9ZM312 386.3L308.700 383.7V388.9Z" fill="#222"/>
<path d="M296.500 400.8V414.3" stroke="#4d9ad9" stroke-width="1"/><rect x="297.500" y="402.3" width="6.500" height="5.500" fill="#eaf3fb" stroke="#4a6fa0" stroke-width="0.700"/><rect x="296.500" y="408.3" width="14.500" height="5" fill="#4d9ad9"/>
<path d="M297.500 421.9L310 433.4M310 421.9L297.500 433.4" stroke="#e8323c" stroke-width="2.800"/>
<path d="M298 447.5H303" stroke="#111" stroke-width="1.600"/><path d="M295.500 447.5L299.500 444.5V450.5Z" fill="#111"/><circle cx="306.700" cy="447.5" r="4.500" fill="#7da7e0" stroke="#3f5f9a" stroke-width="0.900"/><circle cx="307.300" cy="447.0" r="1.800" fill="#a8c4ee"/>
<rect x="296.500" y="460.7" width="14.500" height="15" fill="#e6f0fa" stroke="#8aa8c8" stroke-width="0.700"/><rect x="298" y="462.7" width="2.200" height="2.200" fill="#2f7fc2"/><rect x="301.500" y="462.7" width="2.200" height="2.200" fill="#2f7fc2"/><rect x="298" y="466.2" width="2.200" height="2.200" fill="#2f7fc2"/><rect x="301.500" y="466.2" width="2.200" height="2.200" fill="#2f7fc2"/><rect x="297.500" y="470.7" width="9.500" height="2.600" fill="#2f7fc2"/>
<defs><clipPath id="mf"><circle cx="303.700" cy="509.8" r="7.600"/></clipPath></defs><circle cx="303.700" cy="509.8" r="7.600" fill="#fff"/><g clip-path="url(#mf)" fill="#333"><rect x="296.0" y="502.0" width="3.900" height="3.900"/><rect x="296.0" y="509.8" width="3.900" height="3.900"/><rect x="299.9" y="505.9" width="3.900" height="3.900"/><rect x="299.9" y="513.7" width="3.900" height="3.900"/><rect x="303.8" y="502.0" width="3.900" height="3.900"/><rect x="303.8" y="509.8" width="3.900" height="3.900"/><rect x="307.7" y="505.9" width="3.900" height="3.900"/><rect x="307.7" y="513.7" width="3.900" height="3.900"/></g><circle cx="303.700" cy="509.8" r="7.600" fill="none" stroke="#333" stroke-width="1"/>
<path d="M303.700 530.1L303.70 522.50A7.600 7.600 0 0 1 309.07 524.73Z" fill="#f0c020"/><path d="M303.700 530.1L309.07 524.73A7.600 7.600 0 0 1 311.30 530.10Z" fill="#f08a20"/><path d="M303.700 530.1L311.30 530.10A7.600 7.600 0 0 1 309.07 535.47Z" fill="#e8423a"/><path d="M303.700 530.1L309.07 535.47A7.600 7.600 0 0 1 303.70 537.70Z" fill="#c040a0"/><path d="M303.700 530.1L303.70 537.70A7.600 7.600 0 0 1 298.33 535.47Z" fill="#5a5ad8"/><path d="M303.700 530.1L298.33 535.47A7.600 7.600 0 0 1 296.10 530.10Z" fill="#3a9ae0"/><path d="M303.700 530.1L296.10 530.10A7.600 7.600 0 0 1 298.33 524.73Z" fill="#2fb0a0"/><path d="M303.700 530.1L298.33 524.73A7.600 7.600 0 0 1 303.70 522.50Z" fill="#5ac040"/>
<circle cx="303.700" cy="550.3" r="6.500" fill="#fff" stroke="#1a7fc8" stroke-width="2.400"/><g transform="rotate(-40 303.700 550.3)" fill="#1a7fc8"><rect x="300.200" y="547.9" width="5.400" height="4.800" rx="1.500"/><rect x="298" y="549.5" width="3" height="1.600"/><rect x="305" y="548.2" width="3.200" height="1.300"/><rect x="305" y="551.1" width="3.200" height="1.300"/></g><path d="M296.500 553.3L300 557.3" stroke="#fff" stroke-width="2"/>
<rect x="296.500" y="563.3" width="14.500" height="15.500" fill="#f2f2f2" stroke="#999" stroke-width="0.800"/><rect x="296.500" y="563.3" width="14.500" height="2.500" fill="#bbb"/><path d="M296.500 569.3H311M296.500 573.3H311M301.300 565.8V578.8M306.200 565.8V578.8" stroke="#bbb" stroke-width="0.700"/><rect x="298" y="574.8" width="8" height="3" fill="#c8a878"/>
<rect x="298" y="603.8" width="10.500" height="16.500" rx="1.500" fill="#5a5a5a"/><circle cx="303.200" cy="608.0" r="3" fill="#e8323c"/><circle cx="303.200" cy="615.6" r="3" fill="#2fb050"/><circle cx="303.200" cy="615.6" r="1.300" fill="#1a7a30"/>
</svg>
<!--/MENU-->
<!--TIP-->
<div class="abs" style="left:512.500px;top:155.500px;width:339.500px;height:448.500px;background:#4d4d4d;border-radius:12px"></div>
<div class="tl" style="top:185.0px">Redondea las aristas de un cuerpo sólido mediante la</div>
<div class="tl" style="top:201.2px">adición de material a las aristas interiores y la</div>
<div class="tl" style="top:217.4px">eliminación de material de las aristas exteriores.</div>
<div class="tl" style="top:249.9px">Seleccione aristas, caras u operaciones y, a</div>
<div class="tl" style="top:266.1px">continuación, especifique un radio. Utilice el tipo</div>
<div class="tl" style="top:282.3px">Empalme estándar para añadir empalmes basados en</div>
<div class="tl" style="top:298.5px">reglas especificadas. Utilice el tipo Empalme redondo</div>
<div class="tl" style="top:314.8px">completo para redondear las aristas en tres caras</div>
<div class="tl" style="top:331.0px">adyacentes.</div>
<div class="abs" style="left:529.400px;top:586px;font-size:12px;line-height:16px;font-weight:bold;color:#fff;white-space:nowrap">Pulse Ctrl+/ para obtener más ayuda.</div>
<svg class="abs" style="left:513px;top:370px" width="339" height="190" viewBox="513 370 339 190">
<g transform="translate(515 370) scale(0.28193)" stroke-linejoin="round">
<!-- left cube -->
<path d="M288 48L528 195L282 330L40 195Z" fill="#e0dcd1" stroke="#5a574f" stroke-width="3"/>
<path d="M282 330L528 195V468L282 612Z" fill="#d5d1c6" stroke="#5a574f" stroke-width="3"/>
</g>
<g transform="translate(520 415) scale(0.2004)" stroke-linejoin="round">
<path d="M65 140L310 278V560L215 507V525L150 490V468L65 422Z" fill="#d3cfc4" stroke="#6a675f" stroke-width="3"/>
<path d="M65 140L85 151V300L65 290ZM65 140L310 278V296L65 158Z" fill="#b9b5aa"/>
<path d="M185 210L215 227V400L185 383ZM185 400L215 417V520L185 505Z" fill="#b4b0a5"/>
<path d="M65 305L150 352V368L65 320ZM215 390L310 442V458L215 406Z" fill="#b9b5aa"/>
<path d="M38 48L375 238V640L310 603V280L38 127Z" fill="#dedacf" stroke="#5a574f" stroke-width="3.500"/>
<path d="M38 250L150 313V190L185 210V333L310 403V455L185 385V508L150 490V365L38 302Z" fill="#dedacf" stroke="#6a675f" stroke-width="3"/>
<path d="M152 300L183 318V395L152 378Z" fill="#dedacf"/>
<path d="M85 168V292M85 168L150 204M215 242V392M215 242L310 296M85 336V420M215 420V508" fill="none" stroke="#6a675f" stroke-width="2.500"/>
</g>
<g transform="translate(680 370) scale(0.28193)" stroke-linejoin="round">
<!-- right cube -->
<!-- left face -->
<path d="M68 250L250 350V545L68 447Z" fill="#d6d2c7"/><path d="M180 395L240 428V540L180 506Z" fill="#cdc9be"/><path d="M76 340L134 372V300L76 268Z" fill="#cdc9be"/>
<!-- right face -->
<path d="M345 400Q350 340 400 315L538 240V470L345 582Z" fill="#d5d1c6" stroke="#4d5a66" stroke-width="2.500"/>
<!-- top face -->
<path d="M290 48L478 163L345 243Q290 262 232 240L100 160Z" fill="#e0dcd1" stroke="#4d5a66" stroke-width="2.500"/>
<!-- left fillet band -->
<path d="M100 160L232 240Q205 265 195 335L62 262Q35 235 50 205Q65 178 100 160Z" fill="#8ec6ec" stroke="#3d6a8a" stroke-width="2.500"/>
<!-- right fillet band -->
<path d="M478 163Q520 175 535 205Q545 235 520 250L385 322Q375 270 345 243Z" fill="#8ec6ec" stroke="#3d6a8a" stroke-width="2.500"/>
<!-- corner -->
<path d="M232 240Q290 262 345 243Q375 270 385 322Q345 350 345 425Q295 440 242 420Q242 360 195 335Q205 265 232 240Z" fill="#8cc4ea" stroke="#3d6a8a" stroke-width="2.500"/>
<ellipse cx="280" cy="312" rx="15" ry="10" fill="#d4ecfb" opacity="0.850"/>
<!-- vertical fillet -->
<path d="M242 420Q295 440 345 425V582Q320 605 285 600Q250 595 242 570Z" fill="#8ec6ec" stroke="#3d6a8a" stroke-width="2.500"/>
<path d="M275 432V598" stroke="#a8d6f4" stroke-width="10" opacity="0.600"/>
<!-- rib fillets -->
<path d="M138 300Q155 300 172 318V520Q160 535 145 528Q136 522 138 510Z" fill="#8ec6ec" stroke="#3d6a8a" stroke-width="2"/>
<path d="M50 345Q40 355 45 370Q50 380 62 382L240 478V450L75 352Q62 340 50 345Z" fill="#8ec6ec" stroke="#3d6a8a" stroke-width="2"/>
<path d="M140 400L172 418V440L140 425Z" fill="#8ec6ec"/>
</g>
</svg>
<!--/TIP-->
<!--BOTTOM-->
<svg class="abs" style="left:0;top:596px" width="886" height="78" viewBox="0 596 886 78">
<rect x="508.500" y="603" width="11.500" height="13.500" fill="#9a9a9a"/>
<path d="M510.8 603V616.500M513.1 603V616.500M515.4 603V616.500M517.7 603V616.500M508.500 605.2H520M508.500 607.5H520M508.500 609.8H520M508.500 612.0H520M508.500 614.2H520" stroke="#dcdcdc" stroke-width="0.700"/>
<path d="M523.200 608.300h5.400l-2.700 3.400z" fill="#222"/>
<rect x="536" y="604.600" width="14.700" height="11.100" fill="#6a94d6"/><path d="M543.300 604.600V615.700M536 610.100H550.700" stroke="#a8c4ee" stroke-width="1"/>
<path d="M554.700 608.300h5.400l-2.700 3.400z" fill="#222"/>
<g fill="#555"><rect x="10" y="647.0" width="2.200" height="12.800"/><path d="M21.300 647.0V659.8L12.500 653.4Z"/><path d="M43.500 647.8V659.0L34.300 653.4Z"/><rect x="44.600" y="650.6" width="2.400" height="5.600"/><path d="M61 645.9V660.9L72.700 653.4Z"/><rect x="84" y="650.6" width="2.400" height="5.600"/><path d="M87.600 647.8V659.0L97.200 653.4Z"/><path d="M111 647.0V659.8L119.800 653.4Z"/><rect x="120.400" y="647.0" width="2.200" height="12.800"/></g>
<rect x="147.5" y="645.2" width="13" height="13" fill="none" stroke="#6a9ad0" stroke-width="1" stroke-dasharray="2.400 1"/><path d="M150.5 648.2H157.0Q157.0 655.2 150.5 655.7Z" fill="none" stroke="#555" stroke-width="1"/><path d="M155.0 656.7L160.5 651.2L163.0 653.7L157.5 659.2L154.5 659.7Z" fill="#f0b450"/><path d="M155.0 656.7L157.5 659.2L154.5 659.7Z" fill="#5a4a3a"/><circle cx="161.8" cy="652.4000000000001" r="1.300" fill="#e8423a"/>
<path d="M171.3 648.2L174.3 645.2H183.8V656.7L180.8 660.2H171.3Z" fill="#4d9ad9"/><path d="M171.3 648.2L174.3 645.2H183.8L180.8 648.2Z" fill="#8cc4ee"/><path d="M180.8 648.2L183.8 645.2V656.7L180.8 660.2Z" fill="#3a86c8"/><path d="M185.3 646.7V657.7" stroke="#333" stroke-width="1"/><path d="M183.9 647.7L185.3 644.9000000000001L186.70000000000002 647.7Z" fill="#333"/>
<rect x="194.6" y="644.600" width="15.200" height="14.800" fill="#6cb5ef"/><path d="M194.600 655.500Q197.100 650.800 199.600 651.300Q202.600 651.800 204.600 655.500Q206.600 653.900 207.800 654.100Q209.300 654.700 209.800 656.500V659.400H194.600Z" fill="#3d8dd4"/><circle cx="205.600" cy="648.800" r="1.500" fill="#fffbe6"/>
<rect x="220.4" y="645.2" width="13" height="13" fill="none" stroke="#6a9ad0" stroke-width="1" stroke-dasharray="2.400 1"/><path d="M223.4 648.2H229.9Q229.9 655.2 223.4 655.7Z" fill="none" stroke="#555" stroke-width="1"/><path d="M227.9 656.7L233.4 651.2L235.9 653.7L230.4 659.2L227.4 659.7Z" fill="#f0b450"/><path d="M227.9 656.7L230.4 659.2L227.4 659.7Z" fill="#5a4a3a"/><circle cx="234.70000000000002" cy="652.4000000000001" r="1.300" fill="#e8423a"/>
<path d="M244.2 648.2L247.2 645.2H256.7V656.7L253.7 660.2H244.2Z" fill="#4d9ad9"/><path d="M244.2 648.2L247.2 645.2H256.7L253.7 648.2Z" fill="#8cc4ee"/><path d="M253.7 648.2L256.7 645.2V656.7L253.7 660.2Z" fill="#3a86c8"/><path d="M258.2 646.7V657.7" stroke="#333" stroke-width="1"/><path d="M256.8 647.7L258.2 644.9000000000001L259.59999999999997 647.7Z" fill="#333"/>
<rect x="269.0" y="645.2" width="13" height="13" fill="none" stroke="#6a9ad0" stroke-width="1" stroke-dasharray="2.400 1"/><path d="M272.0 648.2H278.5Q278.5 655.2 272.0 655.7Z" fill="none" stroke="#555" stroke-width="1"/><path d="M276.5 656.7L282.0 651.2L284.5 653.7L279.0 659.2L276.0 659.7Z" fill="#f0b450"/><path d="M276.5 656.7L279.0 659.2L276.0 659.7Z" fill="#5a4a3a"/><circle cx="283.3" cy="652.4000000000001" r="1.300" fill="#e8423a"/>
<path d="M292.8 648.2L295.8 645.2H305.3V656.7L302.3 660.2H292.8Z" fill="#4d9ad9"/><path d="M292.8 648.2L295.8 645.2H305.3L302.3 648.2Z" fill="#8cc4ee"/><path d="M302.3 648.2L305.3 645.2V656.7L302.3 660.2Z" fill="#3a86c8"/><path d="M306.8 646.7V657.7" stroke="#333" stroke-width="1"/><path d="M305.40000000000003 647.7L306.8 644.9000000000001L308.2 647.7Z" fill="#333"/>
<rect x="317.6" y="645.2" width="13" height="13" fill="none" stroke="#6a9ad0" stroke-width="1" stroke-dasharray="2.400 1"/><path d="M320.6 648.2H327.1Q327.1 655.2 320.6 655.7Z" fill="none" stroke="#555" stroke-width="1"/><path d="M325.1 656.7L330.6 651.2L333.1 653.7L327.6 659.2L324.6 659.7Z" fill="#f0b450"/><path d="M325.1 656.7L327.6 659.2L324.6 659.7Z" fill="#5a4a3a"/><circle cx="331.90000000000003" cy="652.4000000000001" r="1.300" fill="#e8423a"/>
<path d="M341.4 648.2L344.4 645.2H353.9V656.7L350.9 660.2H341.4Z" fill="#4d9ad9"/><path d="M341.4 648.2L344.4 645.2H353.9L350.9 648.2Z" fill="#8cc4ee"/><path d="M350.9 648.2L353.9 645.2V656.7L350.9 660.2Z" fill="#3a86c8"/><path d="M355.4 646.7V657.7" stroke="#333" stroke-width="1"/><path d="M354.0 647.7L355.4 644.9000000000001L356.79999999999995 647.7Z" fill="#333"/>
<rect x="366.20000000000005" y="645.2" width="13" height="13" fill="none" stroke="#6a9ad0" stroke-width="1" stroke-dasharray="2.400 1"/><path d="M369.20000000000005 648.2H375.70000000000005Q375.70000000000005 655.2 369.20000000000005 655.7Z" fill="none" stroke="#555" stroke-width="1"/><path d="M373.70000000000005 656.7L379.20000000000005 651.2L381.70000000000005 653.7L376.20000000000005 659.2L373.20000000000005 659.7Z" fill="#f0b450"/><path d="M373.70000000000005 656.7L376.20000000000005 659.2L373.20000000000005 659.7Z" fill="#5a4a3a"/><circle cx="380.50000000000006" cy="652.4000000000001" r="1.300" fill="#e8423a"/>
<path d="M390.0 648.2L393.0 645.2H402.5V656.7L399.5 660.2H390.0Z" fill="#4d9ad9"/><path d="M390.0 648.2L393.0 645.2H402.5L399.5 648.2Z" fill="#8cc4ee"/><path d="M399.5 648.2L402.5 645.2V656.7L399.5 660.2Z" fill="#3a86c8"/><path d="M404.0 646.7V657.7" stroke="#333" stroke-width="1"/><path d="M402.6 647.7L404.0 644.9000000000001L405.4 647.7Z" fill="#333"/>
<path d="M155.0 662.700V669.300H409M178.3 664V669.300M202.6 664V669.300M227.9 664V669.300M251.2 664V669.300M276.5 664V669.300M299.8 664V669.300M325.1 664V669.300M348.4 664V669.300M373.7 664V669.300M397.0 664V669.300" fill="none" stroke="#b8b8b8" stroke-width="1"/>
<path d="M403.500 639H415L410.200 646.400H408.300Z" fill="#555"/><rect x="408.300" y="646" width="1.900" height="23.500" fill="#444"/>
<rect x="865.3" y="645" width="3.400" height="4" fill="#666" transform="rotate(0 867 653)"/><rect x="865.3" y="645" width="3.400" height="4" fill="#666" transform="rotate(45 867 653)"/><rect x="865.3" y="645" width="3.400" height="4" fill="#666" transform="rotate(90 867 653)"/><rect x="865.3" y="645" width="3.400" height="4" fill="#666" transform="rotate(135 867 653)"/><rect x="865.3" y="645" width="3.400" height="4" fill="#666" transform="rotate(180 867 653)"/><rect x="865.3" y="645" width="3.400" height="4" fill="#666" transform="rotate(225 867 653)"/><rect x="865.3" y="645" width="3.400" height="4" fill="#666" transform="rotate(270 867 653)"/><rect x="865.3" y="645" width="3.400" height="4" fill="#666" transform="rotate(315 867 653)"/><circle cx="867" cy="653" r="5.600" fill="#666"/><circle cx="867" cy="653" r="2.500" fill="#f1f1f1"/>
</svg>
<!--/BOTTOM-->
</body></html>
